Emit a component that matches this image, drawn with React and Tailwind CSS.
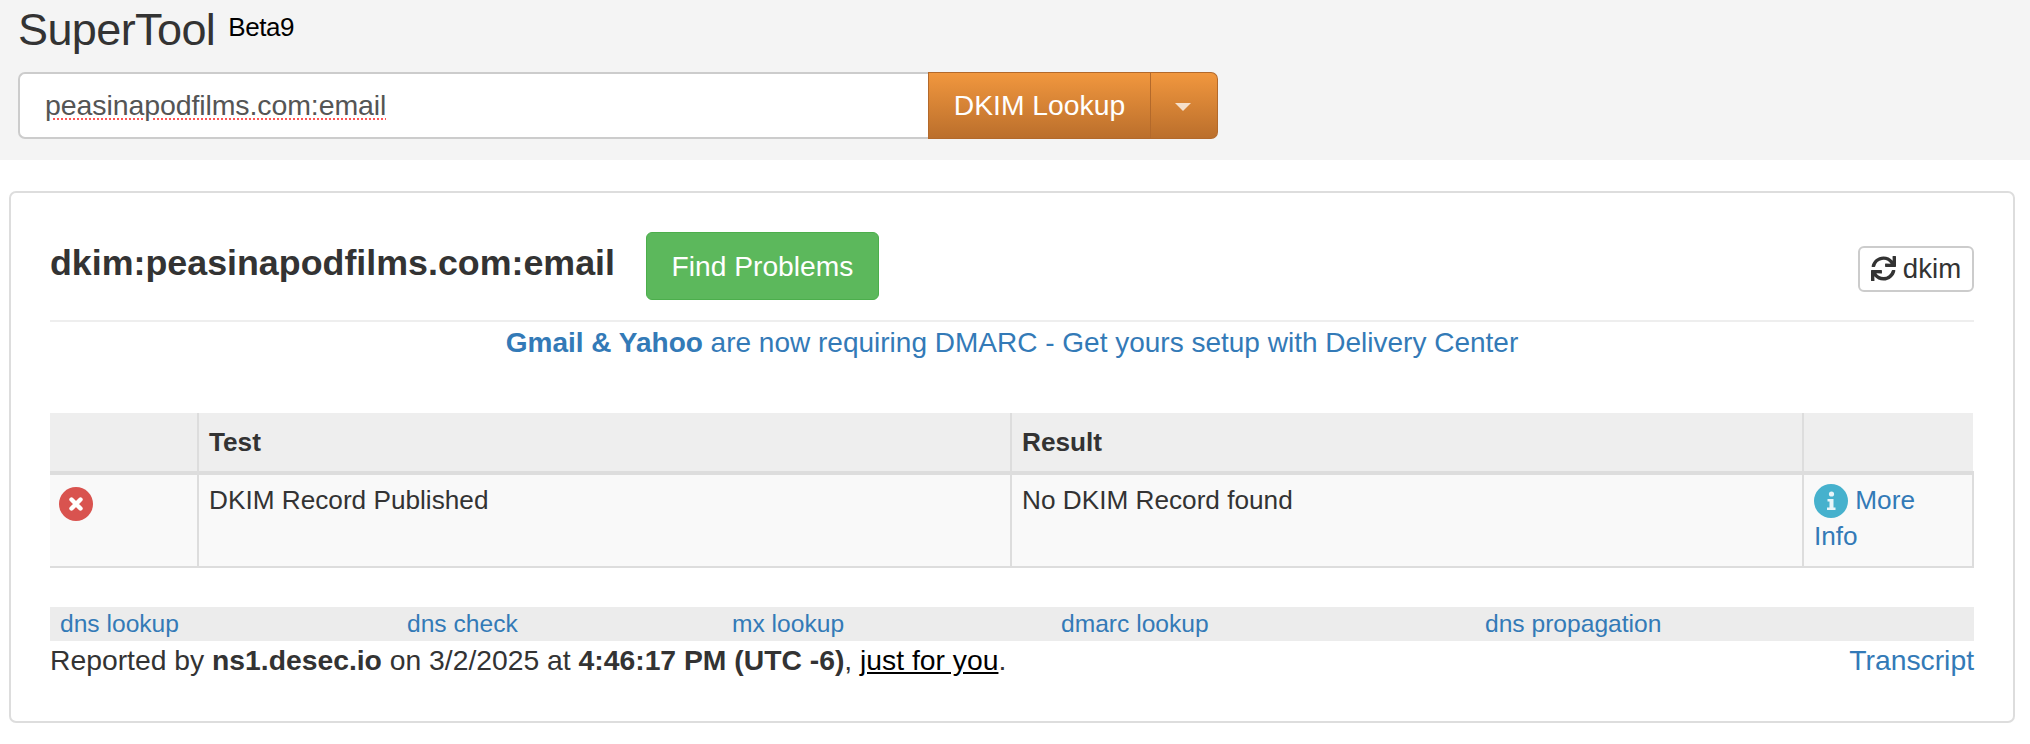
import { FaSync } from "react-icons/fa";

function ErrorIcon() {
  return (
    <svg width="34" height="34" viewBox="0 0 34 34" className="block">
      <circle cx="17" cy="17" r="17" fill="#d9534f" />
      <path d="M12.5 12.5 L21.5 21.5 M21.5 12.5 L12.5 21.5" stroke="#fff" strokeWidth="4.4" strokeLinecap="round" />
    </svg>
  );
}

function InfoIcon() {
  return (
    <svg width="34" height="34" viewBox="0 0 34 34" className="inline-block align-[-9px]">
      <circle cx="17" cy="17" r="17" fill="#46b1cd" />
      <circle cx="17.5" cy="10" r="2.6" fill="#e8f5f9" />
      <path d="M13.5 15 H19.5 V23.5 H21.5 V26 H13 V23.5 H15.5 V17.5 H13.5 Z" fill="#e8f5f9" />
    </svg>
  );
}

export default function App() {
  return (
    <div className="min-h-[744px] bg-white font-['Liberation_Sans',Arial,sans-serif] text-[28px] leading-[35px] text-[#333]">
      <header className="h-[160px] bg-[#f4f4f4] pl-[18px]">
        <div className="flex h-[72px] items-start">
          <h1 className="pt-[6px] text-[45px] font-normal leading-[48px] tracking-[-0.6px] text-[#333]">SuperTool</h1>
          <span className="ml-[13px] pt-[9px] text-[26px] leading-[36px] tracking-[-0.4px] text-black">Beta9</span>
        </div>
        <div className="flex h-[67px] w-[1200px]">
          <input
            readOnly
            value="peasinapodfilms.com:email"
            className="h-full w-[910px] rounded-l-[7px] border-2 border-r-0 border-[#ccc] bg-white pl-[25px] text-[28.5px] tracking-[-0.1px] text-[#555] underline decoration-[#f55] decoration-dotted decoration-2 underline-offset-[3px] outline-none"
          />
          <button className="h-full w-[223px] border border-[#b3692b] bg-gradient-to-b from-[#f1973e] to-[#bb6f2c] text-[28.3px] text-white">
            DKIM Lookup
          </button>
          <button className="flex h-full w-[67px] items-center justify-center rounded-r-[7px] border border-l-0 border-[#b3692b] bg-gradient-to-b from-[#f1973e] to-[#bb6f2c]">
            <span className="mt-[3px] -ml-[2px] h-0 w-0 border-x-[8px] border-t-[8px] border-x-transparent border-t-[#f5e0cc]" />
          </button>
        </div>
      </header>

      <main className="ml-[9px] mr-[15px] mt-[31px] h-[532px] rounded-[7px] border-2 border-[#ddd] px-[39px]">
        <div className="flex h-[129px] items-center border-b-2 border-[#eee] pt-[18px]">
          <h2 className="pb-[6px] text-[35.8px] font-bold leading-[40px] text-[#333]">dkim:peasinapodfilms.com:email</h2>
          <button className="ml-[31px] h-[68px] w-[233px] rounded-[6px] border border-[#4cae4c] bg-[#5cb85c] pt-[2px] text-[28.2px] text-white">
            Find Problems
          </button>
          <button className="ml-auto mt-[6px] flex h-[46px] w-[116px] items-center justify-center gap-[7px] rounded-[6px] border-2 border-[#ccc] bg-white text-[27.6px] text-[#333]">
            <FaSync className="h-[25px] w-[25px]" />
            dkim
          </button>
        </div>

        <p className="h-[91px] pt-[3px] text-center text-[#337ab7]">
          <b>Gmail &amp; Yahoo</b> are now requiring DMARC - Get yours setup with Delivery Center
        </p>

        <table className="w-full table-fixed border-collapse text-[26.2px] leading-[36px]">
          <colgroup>
            <col className="w-[148px]" />
            <col className="w-[813px]" />
            <col className="w-[792px]" />
            <col />
          </colgroup>
          <thead>
            <tr className="h-[60px] bg-[#eee]">
              <th className="border-r-2 border-b-4 border-[#ddd]" />
              <th className="border-r-2 border-b-4 border-[#ddd] px-[10px] text-left align-middle font-bold">Test</th>
              <th className="border-r-2 border-b-4 border-[#ddd] px-[10px] text-left align-middle font-bold">Result</th>
              <th className="border-b-4 border-[#ddd]" />
            </tr>
          </thead>
          <tbody>
            <tr className="h-[94px] bg-[#f9f9f9] align-top">
              <td className="border-r-2 border-b-2 border-[#ddd] px-[9px] pt-[12px]"><ErrorIcon /></td>
              <td className="border-r-2 border-b-2 border-[#ddd] px-[10px] pt-[7px]">DKIM Record Published</td>
              <td className="border-r-2 border-b-2 border-[#ddd] px-[10px] pt-[7px]">No DKIM Record found</td>
              <td className="border-r-2 border-b-2 border-[#ddd] px-[10px] pt-[7px] text-[#337ab7]"><InfoIcon /> More Info</td>
            </tr>
          </tbody>
        </table>

        <nav className="mt-[39px] flex h-[34px] items-center bg-[#ececec] pb-[2px] pl-[10px] text-[24.6px] text-[#337ab7]">
          <a className="w-[347px]">dns lookup</a>
          <a className="w-[325px]">dns check</a>
          <a className="w-[329px]">mx lookup</a>
          <a className="w-[424px]">dmarc lookup</a>
          <a>dns propagation</a>
        </nav>

        <div className="flex items-center justify-between pt-[2px] text-[28.3px]">
          <p>
            Reported by <b>ns1.desec.io</b> on 3/2/2025 at <b>4:46:17 PM (UTC -6)</b>, <a className="text-black underline">just for you</a>.
          </p>
          <a className="text-[#337ab7]">Transcript</a>
        </div>
      </main>
    </div>
  );
}
